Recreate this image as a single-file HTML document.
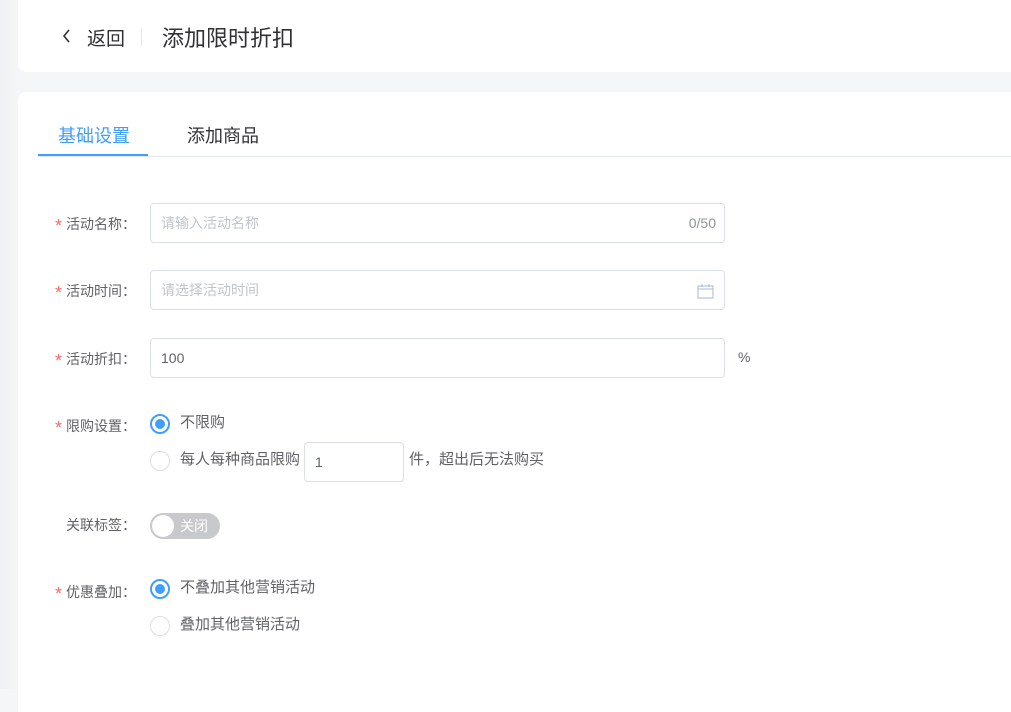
<!DOCTYPE html>
<html><head><meta charset="utf-8"><style>
*{box-sizing:border-box;margin:0;padding:0}
body{width:1011px;height:689px;overflow:hidden;background:#f5f6f8;font-family:"Liberation Sans","Noto Sans CJK SC",sans-serif;position:relative}
.strip{position:absolute;left:0;top:0;width:18px;height:689px;background:linear-gradient(90deg,#eef0f3,#f5f6f8)}
.top{position:absolute;left:18px;top:0;width:1000px;height:72px;background:#fff;border-radius:0 0 8px 8px}
.main{position:absolute;left:18px;top:92px;width:1000px;height:620px;background:#fff;border-radius:8px 0 0 0}
.abs{position:absolute;white-space:nowrap}
.lbl{font-size:14px;color:#606266;text-align:right;width:136px;left:0;line-height:20px}
.lbl i{color:#f56c6c;font-style:normal;margin-right:4px;font-size:18px;vertical-align:-3px}
.inp{position:absolute;border:1px solid #dcdfe6;border-radius:4px;background:#fff;font-size:14px;color:#606266;padding-left:10px;display:flex;align-items:center}
.ph{color:#c0c4cc}
.radio{position:absolute;width:20px;height:20px;border-radius:50%;border:1px solid #dcdfe6;background:#fff}
.radio.on{border:2px solid #409eff;background:#fff}
.radio.on:after{content:"";position:absolute;left:3px;top:3px;width:10px;height:10px;border-radius:50%;background:#409eff}
.rt{font-size:15px;color:#606266;line-height:20px}
</style></head><body>
<div class="strip"></div>
<div class="top">
 <svg class="abs" style="left:43px;top:28px" width="12" height="16" viewBox="0 0 12 16"><path d="M8 2L3 8l5 6" fill="none" stroke="#303133" stroke-width="1.6"/></svg>
 <div class="abs" style="left:69px;top:24px;font-size:19px;color:#303133">返回</div>
 <div class="abs" style="left:123px;top:28px;width:1px;height:18px;background:#e4e7ed"></div>
 <div class="abs" style="left:144px;top:21px;font-size:22px;color:#303133">添加限时折扣</div>
</div>
<div class="main">
 <div class="abs" style="left:40px;top:30px;font-size:18px;color:#409eff">基础设置</div>
 <div class="abs" style="left:169px;top:30px;font-size:18px;color:#303133">添加商品</div>
 <div class="abs" style="left:20px;top:64px;width:980px;height:1px;background:#e4e7ed"></div>
 <div class="abs" style="left:20px;top:62px;width:110px;height:2px;background:#409eff"></div>
</div>
<div class="abs lbl" style="top:214px"><i>*</i>活动名称：</div>
<div class="inp" style="left:150px;top:203px;width:575px;height:40px"><span class="ph">请输入活动名称</span><span style="position:absolute;right:8px;color:#909399">0/50</span></div>
<div class="abs lbl" style="top:281px"><i>*</i>活动时间：</div>
<div class="inp" style="left:150px;top:270px;width:575px;height:40px"><span class="ph">请选择活动时间</span>
<svg style="position:absolute;right:10px;top:12px" width="17" height="16" viewBox="0 0 17 16"><rect x="1" y="3" width="15" height="12" fill="none" stroke="#a8b8d8" stroke-width="1"/><path d="M1 6h15M5 1v3M12 1v3" stroke="#a8b8d8"/></svg></div>
<div class="abs lbl" style="top:349px"><i>*</i>活动折扣：</div>
<div class="inp" style="left:150px;top:338px;width:575px;height:40px">100</div>
<div class="abs rt" style="left:738px;top:347px;font-size:14px">%</div>
<div class="abs lbl" style="top:416px"><i>*</i>限购设置：</div>
<div class="radio on" style="left:150px;top:414px"></div>
<div class="abs rt" style="left:180px;top:413px">不限购</div>
<div class="radio" style="left:150px;top:451px"></div>
<div class="abs rt" style="left:180px;top:450px">每人每种商品限购</div>
<div class="inp" style="left:304px;top:442px;width:100px;height:40px">1</div>
<div class="abs rt" style="left:409px;top:450px">件，超出后无法购买</div>
<div class="abs lbl" style="top:515px">关联标签：</div>
<div class="abs" style="left:150px;top:513px;width:70px;height:26px;border-radius:13px;background:#c8c9cc"><div style="position:absolute;left:2px;top:2px;width:22px;height:22px;border-radius:50%;background:#fff"></div><span style="position:absolute;left:30px;top:3px;font-size:14px;color:#fff">关闭</span></div>
<div class="abs lbl" style="top:582px"><i>*</i>优惠叠加：</div>
<div class="radio on" style="left:150px;top:579px"></div>
<div class="abs rt" style="left:180px;top:578px">不叠加其他营销活动</div>
<div class="radio" style="left:150px;top:616px"></div>
<div class="abs rt" style="left:180px;top:615px">叠加其他营销活动</div>
</body></html>
